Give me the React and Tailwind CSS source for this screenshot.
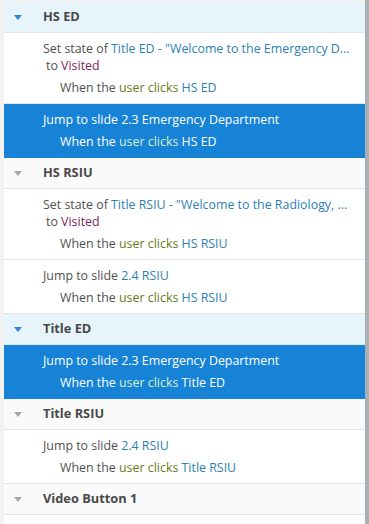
const font = { fontFamily: '"Open Sans", "Noto Sans", sans-serif' };

function Tri({ active }) {
  return (
    <svg width="8" height="5" viewBox="0 0 8 5" className="shrink-0">
      <polygon points="0,0 8,0 4,5" fill={active ? "#2f86d4" : "#a9a9a9"} />
    </svg>
  );
}

function Header({ label, active }) {
  return (
    <div
      className={`flex items-center h-[31px] border-b border-[#e4e4e4] ${
        active ? "bg-[#e8f4fb]" : "bg-[#fafafa]"
      }`}
    >
      <div className="w-[39px] pl-[10px] flex">
        <Tri active={active} />
      </div>
      <span className="text-[12.8px] font-bold text-[#484848]">{label}</span>
    </div>
  );
}

function Trigger({ target, sel }) {
  return (
    <div className={`pl-[56px] mt-[5px] leading-[17px] ${sel ? "text-white" : "text-[#505050]"}`}>
      When the{" "}
      <span className={sel ? "text-[#d6f2c4]" : "text-[#687a18]"}>user clicks</span>{" "}
      <span className={sel ? "text-white" : "text-[#2c7fb3]"}>{target}</span>
    </div>
  );
}

function Item({ children, target, sel }) {
  return (
    <div
      className={`pt-[7px] pb-[7px] border-b ${
        sel ? "bg-[#1683d7] border-[#1683d7]" : "bg-white border-[#e4e4e4]"
      } text-[12.4px]`}
    >
      <div className={`pl-[39px] leading-[17px] ${sel ? "text-white" : "text-[#505050]"}`}>
        {children}
      </div>
      <Trigger target={target} sel={sel} />
    </div>
  );
}

function Jump({ label, sel }) {
  return (
    <>
      Jump to slide <span className={sel ? "text-white" : "text-[#2c7fb3]"}>{label}</span>
    </>
  );
}

function SetState({ obj, quote }) {
  return (
    <>
      <div className="whitespace-nowrap">
        Set state of <span className="text-[#2c7fb3]">{obj} - "{quote}</span>
      </div>
      <div className="pl-[3px]">
        to <span className="text-[#7a2558]">Visited</span>
      </div>
    </>
  );
}

export default function App() {
  return (
    <div className="w-[369px] h-[524px] flex bg-[#f2f2f2] overflow-hidden" style={font}>
      <div className="flex-1 ml-[4px] mt-[2px] bg-white flex flex-col">
        <Header label="HS ED" active />
        <Item target="HS ED">
          <SetState obj="Title ED" quote="Welcome to the Emergency D..." />
        </Item>
        <Item target="HS ED" sel>
          <Jump label="2.3 Emergency Department" sel />
        </Item>
        <Header label="HS RSIU" />
        <Item target="HS RSIU">
          <SetState obj="Title RSIU" quote="Welcome to the Radiology, ..." />
        </Item>
        <Item target="HS RSIU">
          <Jump label="2.4 RSIU" />
        </Item>
        <Header label="Title ED" active />
        <Item target="Title ED" sel>
          <Jump label="2.3 Emergency Department" sel />
        </Item>
        <Header label="Title RSIU" />
        <Item target="Title RSIU">
          <Jump label="2.4 RSIU" />
        </Item>
        <Header label="Video Button 1" />
      </div>
      <div className="w-[4px] bg-[#a8b0b4]" />
    </div>
  );
}
